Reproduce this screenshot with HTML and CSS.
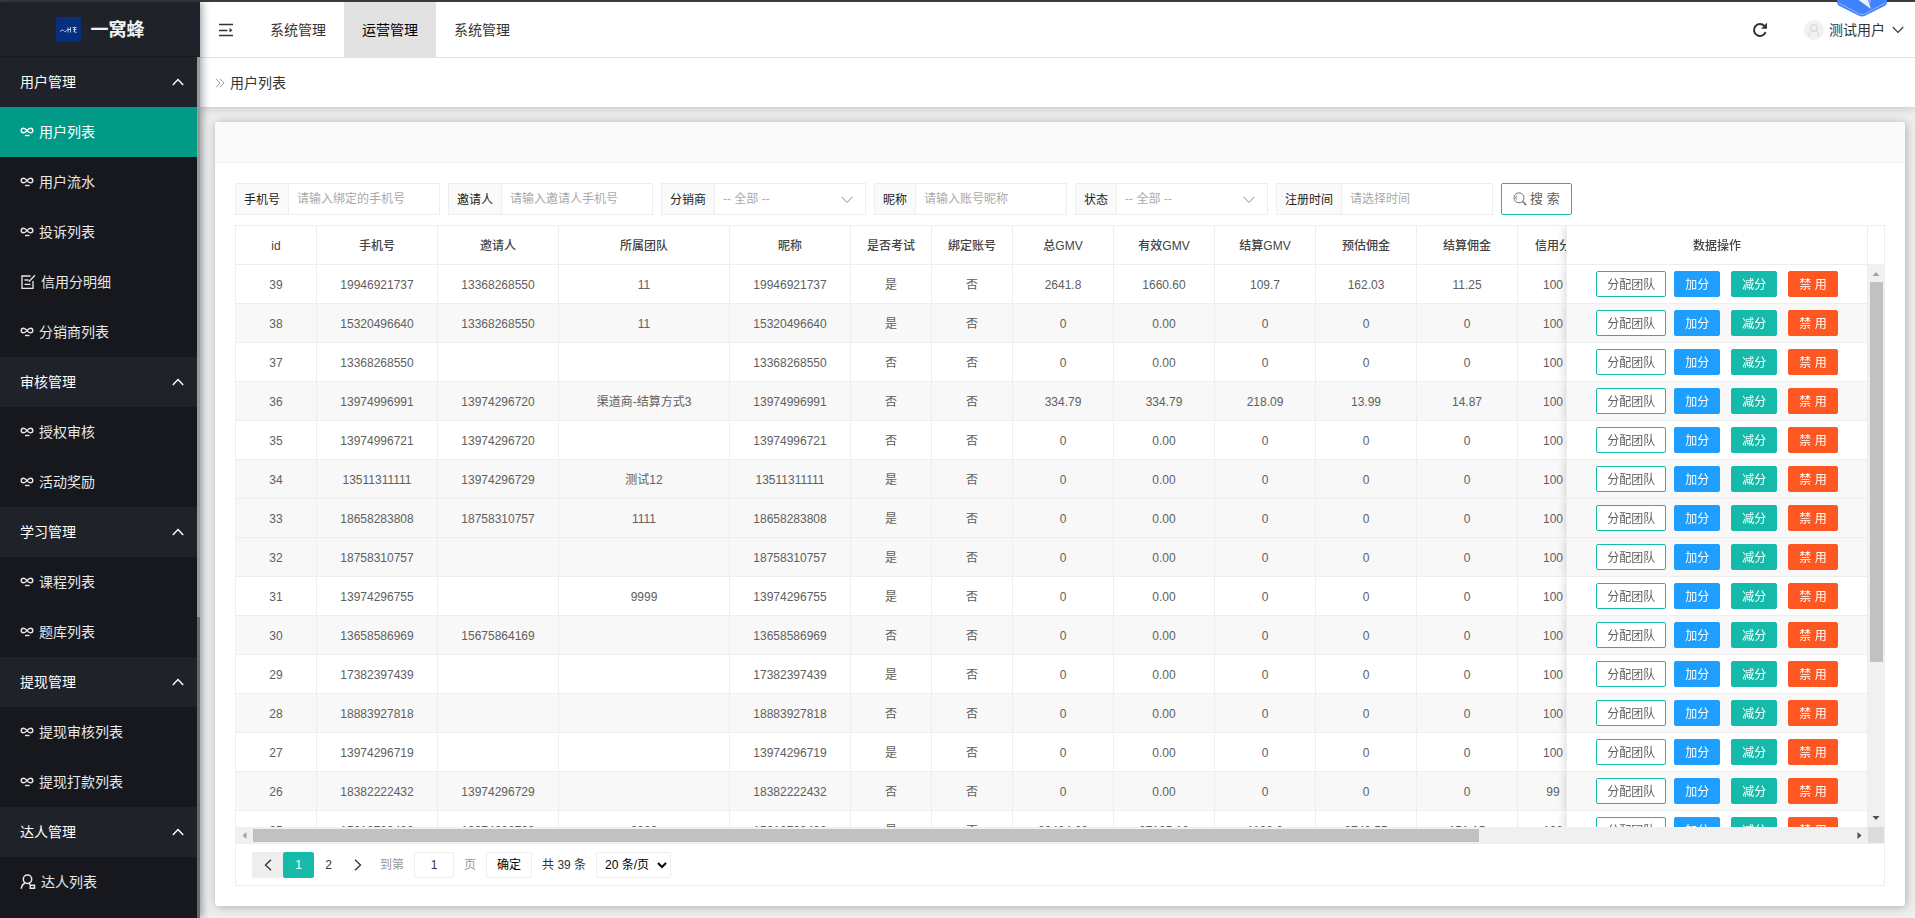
FILE: index.html
```html
<!DOCTYPE html>
<html lang="zh-CN">
<head>
<meta charset="utf-8">
<title>用户列表</title>
<link rel="stylesheet" href="styles.css">
</head>
<body>
<svg class="sprite" aria-hidden="true">
  <symbol id="i-loop" viewBox="0 0 14 14"><g fill="none" stroke="currentColor" stroke-width="1.400"><path d="M7 5.600C5.800 4 5 3.200 3.500 3.200a2.300 2.300 0 0 0 0 4.600C5 7.800 5.800 7.200 7 5.600S9 3.200 10.500 3.200a2.300 2.300 0 0 1 0 4.600C9 7.800 8.200 7.200 7 5.600z"/><path d="M5 10.500h4.500"/></g></symbol>
  <symbol id="i-form" viewBox="0 0 16 16"><g fill="none" stroke="currentColor" stroke-width="1.300"><path d="M10.500 2H2v12.300h11V7"/><path d="M4.500 6h4M4.500 10.300h6M15 1.200 8.800 7.800"/></g></symbol>
  <symbol id="i-user" viewBox="0 0 16 16"><g fill="none" stroke="currentColor" stroke-width="1.500"><circle cx="7.500" cy="5.300" r="4.200"/><path d="M1.300 14.800c.2-3 1.500-4.800 4-5.800M8.800 9.500l1.500.8"/><path d="M10.300 11.300h4.200v3h-4.200z"/></g></symbol>
  <symbol id="i-up" viewBox="0 0 12 8"><path d="M.8 7 6 1.500 11.200 7" fill="none" stroke="currentColor" stroke-width="1.400"/></symbol>
  <symbol id="i-down" viewBox="0 0 12 8"><path d="M.8 1 6 6.500 11.200 1" fill="none" stroke="currentColor" stroke-width="1.100"/></symbol>
</svg>

<div class="app">
  <aside class="side">
    <div class="brand">
      <svg class="brand-mark" viewBox="0 0 25 25" aria-hidden="true"><rect width="25" height="25" rx="1.500" fill="#06307e"/><path d="M4 14.500c1.500-1.700 3-1.900 4-.5s2 .5 3-1.200M12 10.500v5M11.500 12.500h3M14.500 10v5.500M16.500 10.500h4M17 12.500h3.500M17.500 14.500l3 1M18.500 10v5" fill="none" stroke="#c8d3ea" stroke-width=".9"/></svg>
      <span>一窝蜂</span>
    </div>
    <div class="side-body">
      <nav class="menu" id="menu" aria-label="侧边菜单"></nav>
      <div class="side-scroll"><i></i></div>
    </div>
  </aside>

  <div class="page">
    <header class="top">
      <button class="fold" type="button" aria-label="折叠菜单">
        <svg width="16" height="14" viewBox="0 0 16 14"><path d="M1 1.500h14M1 7.500h8.500M1 12.500h14" fill="none" stroke="#333" stroke-width="1.400"/><path d="M11.500 5 14.500 7.200 11.500 9.400z" fill="#333"/></svg>
      </button>
      <nav class="tabs" aria-label="主导航">
        <a href="#">系统管理</a><a href="#" class="on">运营管理</a><a href="#">系统管理</a>
      </nav>
      <button class="reload" type="button" aria-label="刷新">
        <svg width="16" height="16" viewBox="0 0 16 16"><path d="M13.600 10.200A6 6 0 1 1 12.300 3.800" fill="none" stroke="#333" stroke-width="2"/><path d="M15 .8v6H9z" fill="#333"/></svg>
      </button>
      <a href="#" class="account">
        <svg class="avatar" viewBox="0 0 20 20" aria-hidden="true"><circle cx="10" cy="10" r="10" fill="#f1f1f1"/><g fill="none" stroke="#d0d0d0"><circle cx="10" cy="8" r="3.400"/><path d="M5 15.500c.4-2.800 2-4 3.500-4.300M15 15.500c-.4-2.800-2-4-3.500-4.300"/></g></svg>
        <span>测试用户</span>
        <svg class="caret" aria-hidden="true"><use href="#i-down"/></svg>
      </a>
      <svg class="badge" viewBox="0 0 50 17" aria-hidden="true"><path d="M0 0h50v2.500q0 2-2 3.200L28 15.800q-3 1.500-6 0L2 5.700Q0 4.500 0 2.500z" fill="#3f82fb"/><path d="M1.500 2.800 22.500 14q2.500 1.200 5 0l21-11.200" fill="none" stroke="#8fb6ff"/><path d="M21.500 0H31l3 9z" fill="#eaf2ff"/><path d="M31 0h3l-1 6z" fill="#7aa9ff"/></svg>
    </header>

    <div class="crumb">
      <svg width="10" height="10" viewBox="0 0 10 10" aria-hidden="true"><path d="M1 .8 5 5 1 9.200M5 .8 9 5 5 9.200" fill="none" stroke="#999"/></svg>
      <span>用户列表</span>
    </div>

    <main class="card">
      <div class="card-head"></div>
      <div class="card-body">
        <form class="search">
          <div class="field"><label for="phone">手机号</label><input id="phone" placeholder="请输入绑定的手机号"></div>
          <div class="field"><label for="inviter">邀请人</label><input id="inviter" placeholder="请输入邀请人手机号"></div>
          <div class="field pick"><label for="dealer">分销商</label><select id="dealer"><option>-- 全部 --</option></select><svg class="caret" aria-hidden="true"><use href="#i-down"/></svg></div>
          <div class="field"><label for="nick">昵称</label><input id="nick" placeholder="请输入账号昵称"></div>
          <div class="field pick"><label for="state">状态</label><select id="state"><option>-- 全部 --</option></select><svg class="caret" aria-hidden="true"><use href="#i-down"/></svg></div>
          <div class="field"><label for="date">注册时间</label><input id="date" placeholder="请选择时间"></div>
          <button class="go" type="button">
            <svg width="14" height="14" viewBox="0 0 14 14" aria-hidden="true"><g fill="none" stroke="#777"><circle cx="6" cy="5.800" r="5"/><path d="M3.300 7.500a3 3 0 0 1 .5-3.800"/><path d="m9.800 9.500 3.400 3.700" stroke-width="1.700"/></g></svg>搜 索
          </button>
        </form>

        <div class="grid">
          <div class="grid-view">
            <table>
              <colgroup><col class="w80"><col class="w120"><col class="w120"><col class="w170"><col class="w120"><col class="w80"><col class="w80"><col class="w100"><col class="w100"><col class="w100"><col class="w100"><col class="w100"><col class="w70"><col class="wact"></colgroup>
              <thead><tr><th>id</th><th>手机号</th><th>邀请人</th><th>所属团队</th><th>昵称</th><th>是否考试</th><th>绑定账号</th><th>总GMV</th><th>有效GMV</th><th>结算GMV</th><th>预估佣金</th><th>结算佣金</th><th>信用分</th><th class="act">数据操作</th></tr></thead>
              <tbody id="rows"></tbody>
            </table>
          </div>
          <div class="vbar">
            <div class="vbar-head"></div>
            <svg class="arr" viewBox="0 0 16 17"><path d="M4.500 11h7L8 7z" fill="#a3a3a3"/></svg>
            <div class="track"><i></i></div>
            <svg class="arr" viewBox="0 0 16 17"><path d="M4.500 6h7L8 10z" fill="#505050"/></svg>
          </div>
          <div class="hbar">
            <svg class="arr" viewBox="0 0 16 17"><path d="M10 5v7L6 8.500z" fill="#a3a3a3"/></svg>
            <div class="track"><i></i></div>
            <svg class="arr" viewBox="0 0 16 17"><path d="M6 5v7l4-3.500z" fill="#505050"/></svg>
          </div>
          <div class="corner"></div>
          <div class="pager">
            <button type="button" class="pg prev" aria-label="上一页"><svg width="8" height="12" viewBox="0 0 8 12"><path d="M7 .7 1.500 6 7 11.300" fill="none" stroke="#333" stroke-width="1.300"/></svg></button>
            <button type="button" class="pg cur">1</button>
            <button type="button" class="pg num">2</button>
            <button type="button" class="pg" aria-label="下一页"><svg width="8" height="12" viewBox="0 0 8 12"><path d="M1 .7 6.500 6 1 11.300" fill="none" stroke="#333" stroke-width="1.300"/></svg></button>
            <label class="skip" for="pageno">到第</label>
            <input id="pageno" value="1">
            <span class="skip-end">页</span>
            <button type="button" class="ok">确定</button>
            <span class="total">共 39 条</span>
            <select class="limit" aria-label="每页条数"><option>20 条/页</option></select>
          </div>
        </div>
      </div>
    </main>
  </div>
</div>
<script src="app.js"></script>
</body>
</html>
```

FILE: styles.css
```css
* { box-sizing: border-box; }
html, body { height: 100%; }
body {
  margin: 0;
  color: #333;
  font: 14px/24px "Liberation Sans", "Noto Sans CJK SC", sans-serif;
}
a { color: inherit; text-decoration: none; }
button, input, select { font: inherit; color: inherit; margin: 0; }
.sprite { display: none; }

.app { display: flex; height: 100vh; padding-top: 2px; background: #3c3a3b; overflow: hidden; }

/* sidebar */
.side {
  position: relative;
  z-index: 2;
  flex: none;
  display: flex;
  flex-direction: column;
  width: 200px;
  background: #16181d;
  box-shadow: 2px 0 8px rgba(0, 21, 41, .4);
}
.brand {
  display: flex;
  align-items: center;
  justify-content: center;
  gap: 10px;
  height: 55px;
  flex: none;
  background: #20222a;
  border-bottom: 1px solid #1a1c22;
  color: #f2f2f2;
  font-size: 18px;
  font-weight: 700;
}
.brand-mark { width: 25px; height: 25px; }
.brand span { padding-top: 2px; }
.side-body { display: flex; flex: 1; min-height: 0; }
.menu { flex: 1; overflow: hidden; }
.side-scroll { width: 3px; background: #6b6766; }
.side-scroll i { display: block; height: 65%; background: #9c9897; }
.menu a {
  display: flex;
  align-items: center;
  gap: 5px;
  height: 50px;
  padding: 0 13px 0 20px;
  color: #e8e8e8;
}
.menu .group { justify-content: space-between; background: #20222a; color: #fff; }
.menu .on { background: #009a87; color: #fff; }
.menu .ico { width: 14px; height: 14px; }
.menu .ico-lg { width: 16px; height: 16px; }
.menu .chev { width: 12px; height: 8px; }

/* header */
.page { flex: 1; min-width: 0; display: flex; flex-direction: column; background: #eee; }
.top {
  position: relative;
  display: flex;
  align-items: center;
  height: 56px;
  flex: none;
  background: #fff;
  border-bottom: 1px solid #e2e2e2;
}
.fold, .reload { display: flex; justify-content: center; border: 0; background: none; padding: 0; }
.fold { width: 52px; }
.reload { width: 52px; margin-left: auto; }
.tabs { display: flex; align-self: stretch; }
.tabs a { display: flex; align-items: center; padding: 0 18px; }
.tabs .on { background: #e2e2e2; color: #000; }
.account { display: flex; align-items: center; gap: 5px; padding: 0 11px 0 18px; }
.avatar { width: 20px; height: 20px; }
.caret { width: 12px; height: 8px; }
.account .caret { margin-left: 2px; }
.badge { position: absolute; right: 28px; top: -2px; width: 50px; height: 17px; }

.crumb {
  display: flex;
  align-items: center;
  gap: 5px;
  height: 49px;
  flex: none;
  padding-left: 15px;
  background: #fff;
  box-shadow: 0 2px 8px rgba(0, 21, 41, .16);
}

/* card */
.card {
  flex: 1;
  min-height: 0;
  display: flex;
  flex-direction: column;
  margin: 15px 10px 12px 15px;
  background: #fff;
  border-radius: 3px;
  box-shadow: 1px 1px 10px rgba(0, 0, 0, .28);
}
.card-head { height: 41px; flex: none; background: #fafafa; border-bottom: 1px solid #eee; border-radius: 3px 3px 0 0; }
.card-body { flex: 1; min-height: 0; display: flex; flex-direction: column; padding: 20px; font-size: 12px; }

.search { display: flex; flex-wrap: wrap; gap: 8px; margin-bottom: 10px; }
.field { position: relative; display: flex; height: 32px; border: 1px solid #eee; }
.field label { padding: 0 8px; line-height: 32px; background: #fafafa; border-right: 1px solid #eee; color: #222; }
.field input, .field select {
  width: 150px;
  padding: 0 8px;
  border: 0;
  background: #fff;
  color: #aaa;
  appearance: none;
}
.field input::placeholder { color: #aaa; }
.field .caret { position: absolute; right: 12px; top: 12px; color: #b5b5b5; pointer-events: none; }
.go {
  display: flex;
  align-items: center;
  gap: 3px;
  height: 32px;
  padding: 0 11px;
  border: 1px solid #16baaa;
  border-radius: 2px;
  background: #fff;
  color: #5f5f5f;
  font-size: 13px;
}

/* data grid */
.grid {
  flex: 1;
  min-height: 0;
  display: grid;
  grid-template: minmax(0, 1fr) 16px auto / minmax(0, 1fr) 16px;
  border: 1px solid #eee;
}
.grid-view { overflow: hidden; }
table { table-layout: fixed; width: 1655px; min-width: 100%; border-collapse: separate; border-spacing: 0; color: #606060; }
.w70 { width: 71px; }
.w80 { width: 81px; }
.w100 { width: 101px; }
.w120 { width: 121px; }
.w170 { width: 171px; }
.wact { width: 302px; }
th, td {
  height: 39px;
  padding: 2px 6px 0;
  border-right: 1px solid #eee;
  border-bottom: 1px solid #eee;
  background: #fff;
  text-align: center;
  line-height: 24px;
  white-space: nowrap;
}
th { font-weight: 500; color: #444; }
.alt td { background: #f8f8f8; }
.act {
  position: sticky;
  right: 0;
  border-left: 1px solid #eee;
  box-shadow: -1px 0 8px rgba(0, 0, 0, .16);
  clip-path: inset(0 0 0 -10px);
}
td.act { padding-top: 0; }
.acts { display: flex; justify-content: center; gap: 8px; }
.btn {
  height: 26px;
  padding: 1px 10px 0;
  border: 1px solid #16baaa;
  border-radius: 2px;
  background: #fff;
  color: #5f5f5f;
}
.btn + .btn + .btn { margin-left: 3px; }
.btn.blue { background: #1e9fff; border-color: #1e9fff; color: #fff; }
.btn.teal { background: #16baaa; color: #fff; }
.btn.red { background: #ff5722; border-color: #ff5722; color: #fff; }

.vbar { display: flex; flex-direction: column; background: #f0f0f0; }
.vbar-head { height: 39px; flex: none; background: #fff; border-bottom: 1px solid #eee; }
.arr { flex: none; width: 16px; height: 17px; }
.track { flex: 1; }
.track i { display: block; background: #c1c1c1; }
.vbar .track { padding: 0 1px 0 2px; }
.vbar .track i { height: 72%; }
.hbar { display: flex; background: #f0f0f0; }
.hbar .arr { width: 17px; }
.hbar .track { padding: 2px 0; }
.hbar .track i { width: 76.7%; height: 13px; }
.corner { background: #dcdcdc; }

.pager {
  grid-column: 1 / -1;
  display: flex;
  align-items: center;
  height: 42px;
  padding: 0 16px;
  border-top: 1px solid #eee;
}
.pg { display: flex; align-items: center; justify-content: center; width: 30px; height: 26px; padding: 0; border: 0; background: #fff; }
.prev { width: 31px; background: #eee; border-radius: 2px 0 0 2px; }
.cur { width: 31px; background: #16baaa; color: #fff; border-radius: 2px; }
.num { width: 29px; }
.skip { margin: 0 10px 0 7px; color: #999; }
.pager input { width: 40px; height: 26px; padding: 0; border: 1px solid #eee; border-radius: 2px; text-align: center; }
.skip-end { margin: 0 10px; color: #999; }
.ok { height: 26px; padding: 0 10px; border: 1px solid #eee; border-radius: 2px; background: #fff; color: #000; }
.total { margin: 0 10px; }
.limit { width: 75px; height: 26px; padding: 0 4px; border: 1px solid #eee; border-radius: 2px; background: #fff; color: #000; }
```

FILE: app.js
```js
const menu = [
  ['用户管理', ['用户列表'], ['用户流水'], ['投诉列表'], ['信用分明细', 'form'], ['分销商列表']],
  ['审核管理', ['授权审核'], ['活动奖励']],
  ['学习管理', ['课程列表'], ['题库列表']],
  ['提现管理', ['提现审核列表'], ['提现打款列表']],
  ['达人管理', ['达人列表', 'user']],
];

document.getElementById('menu').innerHTML = menu.map(([title, ...items]) =>
  `<a href="#" class="group">${title}<svg class="chev"><use href="#i-up"/></svg></a>` +
  items.map(([name, icon]) =>
    `<a href="#"${name === '用户列表' ? ' class="on"' : ''}><svg class="${icon ? 'ico-lg' : 'ico'}"><use href="#i-${icon || 'loop'}"/></svg>${name}</a>`
  ).join('')
).join('');

const none = ['0', '0.00', '0', '0', '0', '100'];
const rows = [
  ['39', '19946921737', '13368268550', '11', '19946921737', '是', '否', '2641.8', '1660.60', '109.7', '162.03', '11.25', '100'],
  ['38', '15320496640', '13368268550', '11', '15320496640', '是', '否', ...none],
  ['37', '13368268550', '', '', '13368268550', '否', '否', ...none],
  ['36', '13974996991', '13974296720', '渠道商-结算方式3', '13974996991', '否', '否', '334.79', '334.79', '218.09', '13.99', '14.87', '100'],
  ['35', '13974996721', '13974296720', '', '13974996721', '否', '否', ...none],
  ['34', '13511311111', '13974296729', '测试12', '13511311111', '是', '否', ...none],
  ['33', '18658283808', '18758310757', '1111', '18658283808', '是', '否', ...none],
  ['32', '18758310757', '', '', '18758310757', '是', '否', ...none],
  ['31', '13974296755', '', '9999', '13974296755', '是', '否', ...none],
  ['30', '13658586969', '15675864169', '', '13658586969', '否', '否', ...none],
  ['29', '17382397439', '', '', '17382397439', '是', '否', ...none],
  ['28', '18883927818', '', '', '18883927818', '否', '否', ...none],
  ['27', '13974296719', '', '', '13974296719', '是', '否', ...none],
  ['26', '18382222432', '13974296729', '', '18382222432', '否', '否', '0', '0.00', '0', '0', '0', '99'],
  ['25', '15010703400', '13974296729', '9999', '15010703400', '是', '否', '23404.60', '27105.10', '1100.0', '2740.55', '151.15', '100'],
];
const hovered = '33';
const actions = `<td class="act"><div class="acts"><button type="button" class="btn">分配团队</button><button type="button" class="btn blue">加分</button><button type="button" class="btn teal">减分</button><button type="button" class="btn red">禁 用</button></div></td>`;

document.getElementById('rows').innerHTML = rows.map((row, i) =>
  `<tr${i % 2 || row[0] === hovered ? ' class="alt"' : ''}>${row.map(v => `<td>${v}</td>`).join('')}${actions}</tr>`
).join('');
```
